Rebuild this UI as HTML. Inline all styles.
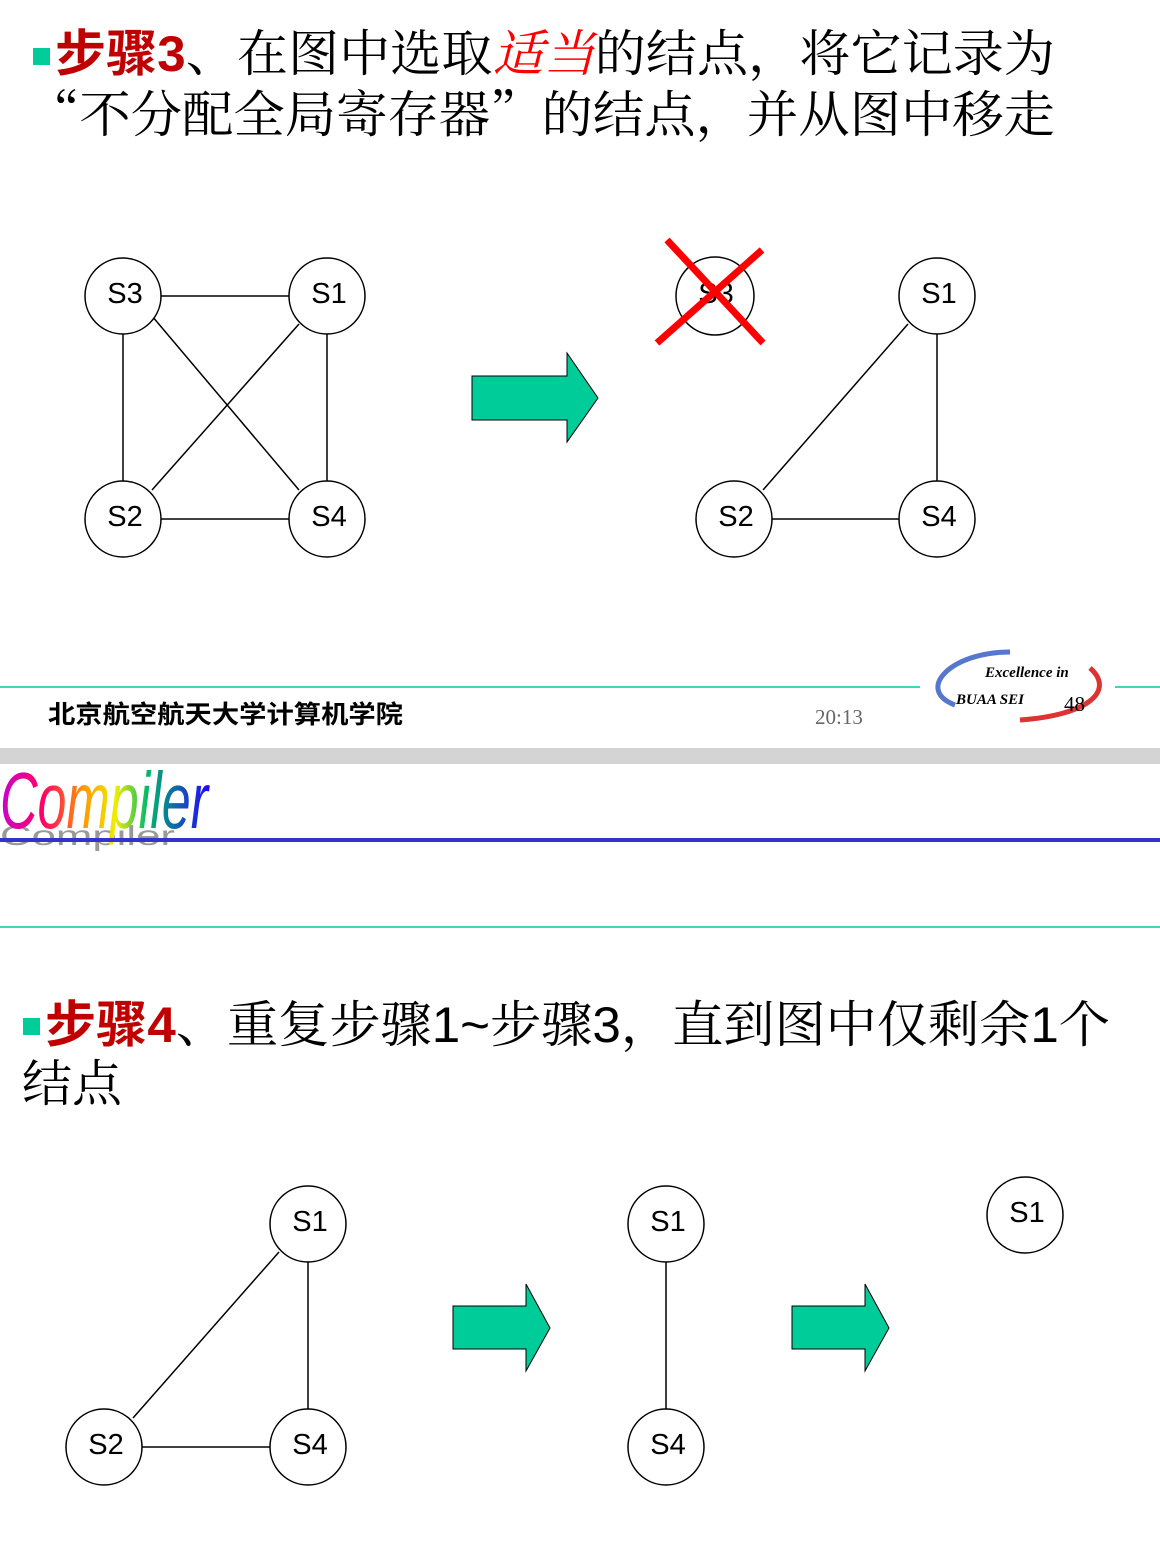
<!DOCTYPE html>
<html><head><meta charset="utf-8"><style>
html,body{margin:0;padding:0;background:#fff;width:1160px;height:1568px;overflow:hidden}
svg{display:block}
.cj{font-family:"Liberation Serif","Noto Serif CJK SC",serif;font-size:50px}
.lb{font-family:"Liberation Sans",sans-serif;font-size:29px;text-anchor:middle}
</style></head><body>
<svg width="1160" height="1568" viewBox="0 0 1160 1568" xmlns="http://www.w3.org/2000/svg">
<rect x="33" y="48" width="17" height="17" fill="#00cc99"/>
<text class="cj" x="55" y="71" textLength="1000" lengthAdjust="spacingAndGlyphs"><tspan fill="#c00000" font-weight="bold" font-family="Liberation Sans,Noto Sans CJK SC,sans-serif">步骤3</tspan>、在图中选取<tspan fill="#ff0000" font-style="italic">适当</tspan>的结点，将它记录为</text>
<text class="cj" x="28" y="132" textLength="1027" lengthAdjust="spacingAndGlyphs"><tspan font-family="Noto Serif CJK SC,serif">“</tspan>不分配全局寄存器<tspan font-family="Noto Serif CJK SC,serif">”</tspan>的结点，并从图中移走</text>
<g stroke="#000" stroke-width="1.5" fill="none">
<line x1="161" y1="296" x2="289" y2="296"/><line x1="123" y1="334" x2="123" y2="481"/><line x1="327" y1="334" x2="327" y2="481"/><line x1="161" y1="519" x2="289" y2="519"/>
<line x1="152" y1="316" x2="299" y2="490"/><line x1="299" y1="324" x2="152" y2="490"/>
<line x1="908" y1="324" x2="763" y2="490"/><line x1="937" y1="334" x2="937" y2="481"/><line x1="772" y1="519" x2="899" y2="519"/>
<line x1="308" y1="1262" x2="308" y2="1409"/><line x1="279" y1="1252" x2="133" y2="1418"/><line x1="142" y1="1447" x2="270" y2="1447"/>
<line x1="666" y1="1262" x2="666" y2="1409"/>
</g>
<g stroke="#000" stroke-width="1.5" fill="#fff">
<circle cx="123" cy="296" r="38"/><circle cx="327" cy="296" r="38"/><circle cx="123" cy="519" r="38"/><circle cx="327" cy="519" r="38"/>
<circle cx="715" cy="296" r="39"/><circle cx="937" cy="296" r="38"/><circle cx="734" cy="519" r="38"/><circle cx="937" cy="519" r="38"/>
<circle cx="308" cy="1224" r="38"/><circle cx="104" cy="1447" r="38"/><circle cx="308" cy="1447" r="38"/>
<circle cx="666" cy="1224" r="38"/><circle cx="666" cy="1447" r="38"/><circle cx="1025" cy="1215" r="38"/>
</g>
<g class="lb">
<text x="125" y="303">S3</text><text x="329" y="303">S1</text><text x="125" y="526">S2</text><text x="329" y="526">S4</text>
<text x="716" y="303">S3</text><text x="939" y="303">S1</text><text x="736" y="526">S2</text><text x="939" y="526">S4</text>
<text x="310" y="1231">S1</text><text x="106" y="1454">S2</text><text x="310" y="1454">S4</text>
<text x="668" y="1231">S1</text><text x="668" y="1454">S4</text><text x="1027" y="1222">S1</text>
</g>
<g stroke="#ff0000" stroke-width="7"><line x1="667" y1="240" x2="763" y2="343"/><line x1="762" y1="250" x2="657" y2="343"/></g>
<g fill="#00cc99" stroke="#000" stroke-width="1">
<polygon points="472,376 567,376 567,353 598,398 567,442 567,420 472,420"/>
<polygon points="453,1306 526,1306 526,1284 550,1328 526,1371 526,1349 453,1349"/>
<polygon points="792,1306 865,1306 865,1284 889,1328 865,1371 865,1349 792,1349"/>
</g>
<line x1="0" y1="687" x2="920" y2="687" stroke="#00cc99" stroke-width="1.5"/>
<line x1="1115" y1="687" x2="1160" y2="687" stroke="#00cc99" stroke-width="1.5"/>
<text x="48" y="723" font-family="Liberation Sans,Noto Sans CJK SC,sans-serif" font-weight="bold" font-size="25" textLength="355" lengthAdjust="spacingAndGlyphs">北京航空航天大学计算机学院</text>
<text x="815" y="724" font-family="Liberation Serif,serif" font-size="21" fill="#666">20:13</text>
<path d="M1010,652 C950,652 915,690 955,705" stroke="#5577cc" stroke-width="5" fill="none"/>
<path d="M1090,668 C1115,690 1090,715 1020,720" stroke="#dd3333" stroke-width="5" fill="none"/>
<text x="985" y="677" font-family="Liberation Serif,serif" font-style="italic" font-weight="bold" font-size="15">Excellence in</text>
<text x="956" y="704" font-family="Liberation Serif,serif" font-style="italic" font-weight="bold" font-size="15">BUAA  SEI</text>
<text x="1064" y="711" font-family="Liberation Serif,serif" font-size="21">48</text>
<rect x="0" y="748" width="1160" height="16" fill="#d4d4d4"/>
<defs><linearGradient id="rb" x1="0" x2="1"><stop offset="0" stop-color="#cc00cc"/><stop offset=".2" stop-color="#ff0066"/><stop offset=".4" stop-color="#ff9900"/><stop offset=".55" stop-color="#eeee00"/><stop offset=".7" stop-color="#00bb66"/><stop offset="1" stop-color="#2200ff"/></linearGradient></defs>
<g transform="translate(0,845) scale(1,0.35)"><text x="0" y="0" font-family="Liberation Sans,sans-serif" font-size="80" fill="#999" textLength="175" lengthAdjust="spacingAndGlyphs">Compiler</text></g>
<text x="0" y="828" font-family="Liberation Sans,sans-serif" font-style="italic" font-size="80" fill="url(#rb)" textLength="208" lengthAdjust="spacingAndGlyphs">Compiler</text>
<rect x="0" y="838" width="1160" height="4" fill="#3333cc"/>
<line x1="0" y1="927" x2="1160" y2="927" stroke="#00cc99" stroke-width="1.5"/>
<rect x="23" y="1018" width="17" height="17" fill="#00cc99"/>
<text class="cj" x="45" y="1042" textLength="1065" lengthAdjust="spacingAndGlyphs"><tspan fill="#c00000" font-weight="bold" font-family="Liberation Sans,Noto Sans CJK SC,sans-serif">步骤4</tspan>、重复步骤<tspan font-family="Liberation Sans,sans-serif">1~</tspan>步骤<tspan font-family="Liberation Sans,sans-serif">3</tspan>，直到图中仅剩余<tspan font-family="Liberation Sans,sans-serif">1</tspan>个</text>
<text class="cj" x="22" y="1101">结点</text>
</svg>
</body></html>
